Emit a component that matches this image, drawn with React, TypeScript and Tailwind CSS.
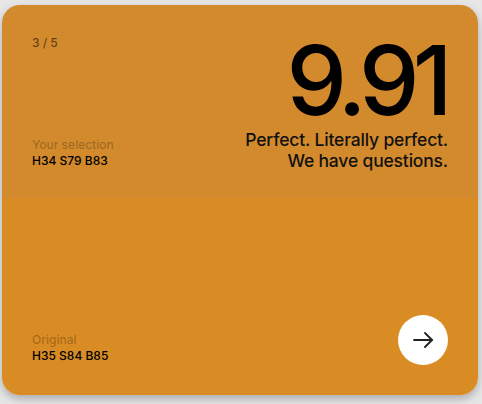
export default function App() {
  return (
    <div
      className="w-[482px] h-[404px] bg-[#e6e6e6] pt-[5px] pl-[2px]"
      style={{ fontFamily: "Inter, 'Liberation Sans', sans-serif" }}
    >
      <div className="w-[476px] h-[390px] rounded-[18px] overflow-hidden flex flex-col shadow-[0_4px_8px_rgba(0,0,0,0.25)]">
        <div className="h-[193px] bg-[#D38A2D] flex justify-between px-[30px] pt-[30px] pb-[29px]">
          <div className="flex flex-col justify-between text-[12px] leading-[16px] font-medium">
            <span className="text-black/55">3 / 5</span>
            <div className="flex flex-col">
              <span className="text-black/25">Your selection</span>
              <span className="text-black">H34 S79 B83</span>
            </div>
          </div>
          <div className="flex flex-col items-end mt-[3px]">
            <span className="text-[96px] leading-[84px] tracking-[-0.07em] text-black font-medium pr-[2px]">
              9.91
            </span>
            <p className="mt-[7px] text-[17.5px] leading-[21px] text-right text-[#111] font-medium tracking-[-0.01em]">
              Perfect. Literally perfect.
              <br />
              We have questions.
            </p>
          </div>
        </div>
        <div className="flex-1 bg-[#D98C23] flex justify-between items-end px-[30px] pb-[30px]">
          <div className="flex flex-col text-[12px] leading-[16px] pb-[1px] font-medium">
            <span className="text-black/25">Original</span>
            <span className="text-black">H35 S84 B85</span>
          </div>
          <button className="w-[50px] h-[50px] rounded-full bg-white flex items-center justify-center">
            <svg width="20" height="16" viewBox="0 0 20 16" fill="none" stroke="#222" strokeWidth="1.8" strokeLinecap="round" strokeLinejoin="round">
              <path d="M1 8h18" />
              <path d="M12 1l7 7-7 7" />
            </svg>
          </button>
        </div>
      </div>
    </div>
  );
}
